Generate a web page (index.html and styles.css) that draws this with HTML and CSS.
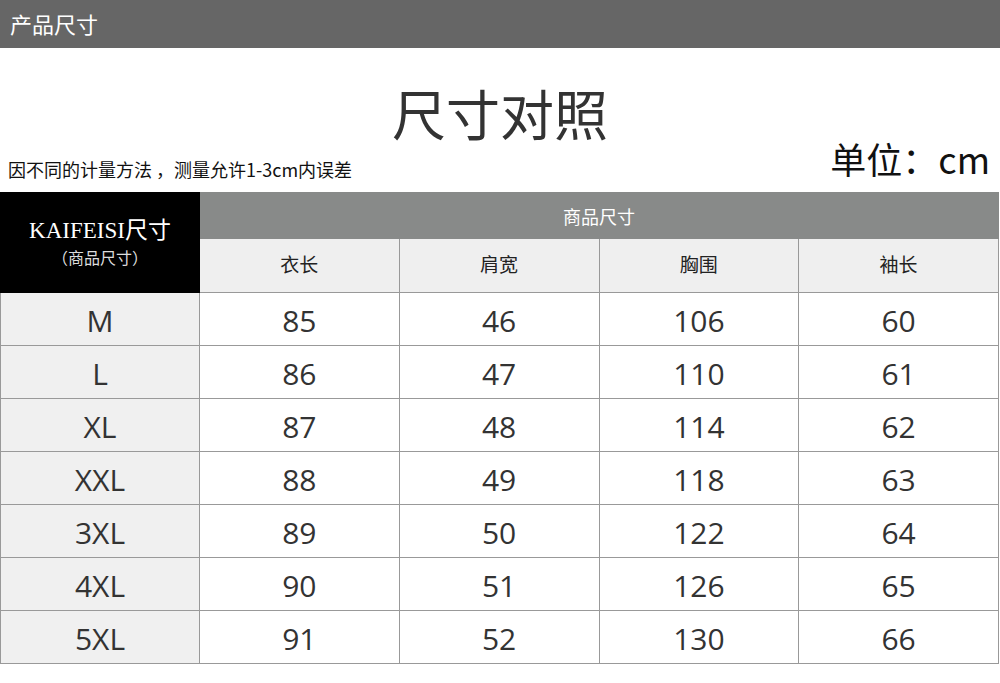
FILE: index.html
```html
<!DOCTYPE html>
<html lang="zh">
<head>
<meta charset="utf-8">
<link rel="stylesheet" href="styles.css">
</head>
<body>
<div class="topbar">产品尺寸</div>
<h1 class="title">尺寸对照</h1>
<div class="info">
  <div class="note">因不同的计量方法 ，测量允许1-3cm内误差</div>
  <div class="unit">单位：cm</div>
</div>
<table class="size-table">
  <thead>
    <tr class="group-row">
      <th class="brand" rowspan="2"><div class="brand-name">KAIFEISI尺寸</div><div class="brand-sub">（商品尺寸）</div></th>
      <th class="group" colspan="4">商品尺寸</th>
    </tr>
    <tr class="sub-row">
      <th>衣长</th><th>肩宽</th><th>胸围</th><th>袖长</th>
    </tr>
  </thead>
  <tbody>
    <tr><td class="size">M</td><td>85</td><td>46</td><td>106</td><td>60</td></tr>
    <tr><td class="size">L</td><td>86</td><td>47</td><td>110</td><td>61</td></tr>
    <tr><td class="size">XL</td><td>87</td><td>48</td><td>114</td><td>62</td></tr>
    <tr><td class="size">XXL</td><td>88</td><td>49</td><td>118</td><td>63</td></tr>
    <tr><td class="size">3XL</td><td>89</td><td>50</td><td>122</td><td>64</td></tr>
    <tr><td class="size">4XL</td><td>90</td><td>51</td><td>126</td><td>65</td></tr>
    <tr><td class="size">5XL</td><td>91</td><td>52</td><td>130</td><td>66</td></tr>
  </tbody>
</table>
</body>
</html>
```
FILE: styles.css
```css
html, body {
  margin: 0;
  padding: 0;
  background: #fff;
}
body {
  font-family: "Noto Sans CJK SC", "Noto Sans", sans-serif;
  color: #222;
  width: 1000px;
  height: 683px;
  overflow: hidden;
}
.topbar {
  height: 48px;
  line-height: 46px;
  background: #666666;
  color: #fff;
  font-size: 22px;
  padding-left: 10px;
}
.title {
  margin: 36px 0 0 0;
  height: 58px;
  line-height: 58px;
  font-size: 54px;
  font-weight: 400;
  text-align: center;
  color: #333;
}
.info {
  height: 50px;
  display: flex;
  justify-content: space-between;
  align-items: flex-end;
  padding: 0 10px 0 8px;
}
.note {
  font-size: 18px;
  line-height: 22px;
  color: #111;
  margin-bottom: 12px;
}
.unit {
  font-size: 36px;
  line-height: 40px;
  color: #111;
  margin-bottom: 14px;
}
.size-table {
  border-collapse: collapse;
  margin-left: 0;
  width: 999px;
  table-layout: fixed;
}
.size-table th, .size-table td {
  border: 1px solid #999;
  padding: 0;
  text-align: center;
  font-weight: 400;
}
.size-table th:first-child, .size-table td:first-child {
  width: 198px;
}
.group-row th {
  height: 45px;
}
.brand {
  background: #000;
  color: #fff;
  border-color: #000 !important;
}
.brand-name {
  font-family: "Liberation Serif", "Noto Sans CJK SC", serif;
  font-size: 23px;
  line-height: 28px;
  margin-top: 0;
}
.brand-sub {
  font-size: 16px;
  line-height: 24px;
  color: #ddd;
}
.group {
  background: #888a89;
  color: #fff;
  font-size: 18px;
  border-color: #888a89 !important;
}
.sub-row th {
  height: 49px;
  background: #efefef;
  font-size: 19px;
  color: #222;
  padding-bottom: 4px !important;
}
.size-table td {
  height: 49px;
  padding-top: 3px;
  font-family: "Open Sans", sans-serif;
  font-size: 30px;
  color: #333;
}
.size-table td.size {
  background: #f0f0f0;
}
```
